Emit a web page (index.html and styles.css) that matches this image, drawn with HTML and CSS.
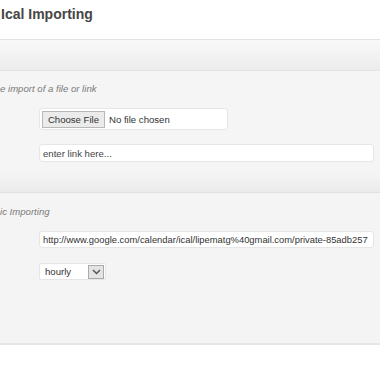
FILE: index.html
```html
<!DOCTYPE html>
<html lang="en">
<head>
    <meta charset="UTF-8">
    <title>Ical Importing</title>
    <link rel="stylesheet" href="styles.css">
</head>
<body>
    <h2 class="page-title">Ical Importing</h2>

    <div class="panel">
        <div class="panel-head"></div>

        <div class="section">
            <p class="section-label">e import of a file or link</p>
            <div class="field">
                <div class="file-box">
                    <button class="file-btn">Choose File</button>
                    <span class="file-name">No file chosen</span>
                </div>
            </div>
            <div class="field">
                <input type="text" class="text-input wide" placeholder="enter link here...">
            </div>
        </div>

        <div class="section last">
            <p class="section-label">ic Importing</p>
            <div class="field">
                <input type="text" class="text-input wide url" value="http://www.google.com/calendar/ical/lipematg%40gmail.com/private-85adb257">
            </div>
            <div class="field">
                <div class="select-box">
                    <span class="select-value">hourly</span>
                    <span class="select-arrow">
                        <svg width="9" height="6" viewBox="0 0 9 6">
                            <path d="M1 1 L4.5 4.5 L8 1" fill="none" stroke="#555" stroke-width="1.5"/>
                        </svg>
                    </span>
                </div>
            </div>
        </div>
    </div>
</body>
</html>
```

FILE: styles.css
```css
* {
    margin: 0;
    padding: 0;
    box-sizing: border-box;
}

body {
    font-family: 'Liberation Sans', Arial, sans-serif;
    font-size: 9.6px;
    color: #333;
    background: #fff;
    overflow: hidden;
}

.page-title {
    height: 39px;
    padding-top: 6px;
    padding-left: 1px;
    font-size: 14px;
    font-weight: bold;
    line-height: 17px;
    color: #464646;
}

.panel {
    border-top: 1px solid #e2e2e2;
    border-bottom: 2px solid #e6e6e6;
    background: #f5f5f5;
}

.panel-head {
    height: 31px;
    background: linear-gradient(to bottom, #f9f9f9, #ececec);
    border-bottom: 1px solid #e4e4e4;
}

.section {
    padding: 11px 0 30px 0;
    background: linear-gradient(to bottom, #f5f5f5 calc(100% - 20px), #ebebeb);
    border-bottom: 1px solid #e0e0e0;
}

.section.last {
    padding: 12px 0 63px 0;
    background: #f4f4f4;
    border-bottom: none;
}

.section-label {
    font-style: italic;
    color: #7a7a7a;
    line-height: 14px;
    font-size: 9.6px;
}

.field {
    margin-left: 39px;
    margin-top: 12px;
}

.field + .field {
    margin-top: 14px;
}

.section.last .field + .field {
    margin-top: 15px;
}

.file-box {
    display: flex;
    align-items: center;
    width: 189px;
    height: 22px;
    padding: 0 2px;
    background: #fff;
    border: 1px solid #e6e6e6;
    border-radius: 3px;
}

.file-btn {
    width: 63px;
    height: 17px;
    padding: 0;
    font-family: 'Liberation Sans', Arial, sans-serif;
    font-size: 9.6px;
    color: #333;
    background: #ebebeb;
    border: 1px solid #b8b8b8;
    border-radius: 0;
}

.file-name {
    margin-left: 4px;
    color: #333;
}

.text-input {
    display: block;
    height: 18px;
    padding: 0 3px;
    font-family: 'Liberation Sans', Arial, sans-serif;
    font-size: 9.6px;
    color: #333;
    background: #fff;
    border: 1px solid #e6e6e6;
    border-radius: 3px;
    outline: none;
}

.text-input::placeholder {
    color: #444;
}

.text-input.wide {
    width: 335px;
}

.text-input.url {
    height: 17px;
    font-size: 9.4px;
}

.select-box {
    display: flex;
    align-items: center;
    justify-content: space-between;
    width: 67px;
    height: 17px;
    padding: 0 1px 0 5px;
    background: #fff;
    border: 1px solid #e6e6e6;
    border-radius: 2px;
}

.select-arrow {
    display: flex;
    align-items: center;
    justify-content: center;
    width: 16px;
    height: 14px;
    background: #e4e4e4;
    border: 1px solid #aaa;
}
```
